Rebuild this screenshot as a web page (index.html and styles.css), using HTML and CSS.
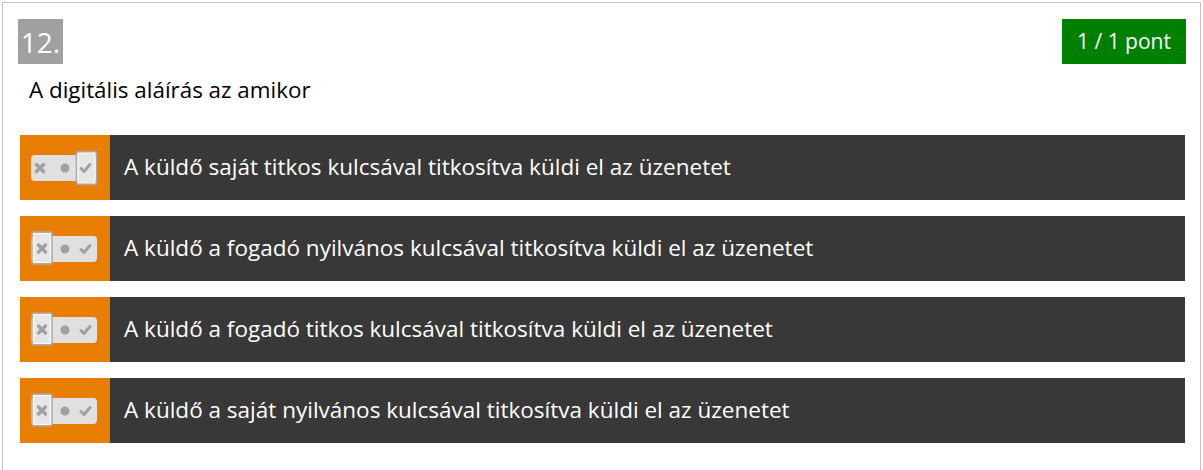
FILE: index.html
```html
<!DOCTYPE html>
<html lang="hu">
<head>
<meta charset="utf-8">
<link rel="stylesheet" href="styles.css">
</head>
<body>
<div class="question">
  <div class="qhead">
    <div class="qnum">12.</div>
    <div class="score">1 / 1 pont</div>
  </div>
  <div class="qtext">A digitális aláírás az amikor</div>
  <div class="options">
    <div class="option">
      <div class="mark">
        <svg class="toggle" width="68" height="36" viewBox="0 0 68 36">
          <rect class="bar" x="1" y="5" width="66" height="26" rx="4"/>
          <rect class="sel" x="46.5" y="1.5" width="20" height="33" rx="1"/>
          <rect class="sel-in" x="48" y="3" width="17" height="30"/>
          <path class="ic" d="M6.5 14.5 L13.5 21.5 M13.5 14.5 L6.5 21.5"/>
          <circle class="dot" cx="35" cy="18" r="4.5"/>
          <path class="ic chk" d="M51 18.5 L54 21.5 L60 14.5"/>
        </svg>
      </div>
      <div class="label">A küldő saját titkos kulcsával titkosítva küldi el az üzenetet</div>
    </div>
    <div class="option">
      <div class="mark">
        <svg class="toggle" width="68" height="36" viewBox="0 0 68 36">
          <rect class="bar" x="1" y="5" width="66" height="26" rx="4"/>
          <rect class="sel" x="2" y="1" width="20" height="32" rx="1"/>
          <rect class="sel-in" x="3.5" y="2.5" width="17" height="29"/>
          <path class="ic" d="M8.5 14 L15.5 21 M15.5 14 L8.5 21"/>
          <circle class="dot" cx="35" cy="18" r="4.5"/>
          <path class="ic chk" d="M51 18.5 L54 21.5 L60 14.5"/>
        </svg>
      </div>
      <div class="label">A küldő a fogadó nyilvános kulcsával titkosítva küldi el az üzenetet</div>
    </div>
    <div class="option">
      <div class="mark">
        <svg class="toggle" width="68" height="36" viewBox="0 0 68 36">
          <rect class="bar" x="1" y="5" width="66" height="26" rx="4"/>
          <rect class="sel" x="2" y="1" width="20" height="32" rx="1"/>
          <rect class="sel-in" x="3.5" y="2.5" width="17" height="29"/>
          <path class="ic" d="M8.5 14 L15.5 21 M15.5 14 L8.5 21"/>
          <circle class="dot" cx="35" cy="18" r="4.5"/>
          <path class="ic chk" d="M51 18.5 L54 21.5 L60 14.5"/>
        </svg>
      </div>
      <div class="label">A küldő a fogadó titkos kulcsával titkosítva küldi el az üzenetet</div>
    </div>
    <div class="option">
      <div class="mark">
        <svg class="toggle" width="68" height="36" viewBox="0 0 68 36">
          <rect class="bar" x="1" y="5" width="66" height="26" rx="4"/>
          <rect class="sel" x="2" y="1" width="20" height="32" rx="1"/>
          <rect class="sel-in" x="3.5" y="2.5" width="17" height="29"/>
          <path class="ic" d="M8.5 14 L15.5 21 M15.5 14 L8.5 21"/>
          <circle class="dot" cx="35" cy="18" r="4.5"/>
          <path class="ic chk" d="M51 18.5 L54 21.5 L60 14.5"/>
        </svg>
      </div>
      <div class="label">A küldő a saját nyilvános kulcsával titkosítva küldi el az üzenetet</div>
    </div>
  </div>
</div>
</body>
</html>
```
FILE: styles.css
```css
html, body {
  margin: 0;
  padding: 0;
  background: #ffffff;
}
body {
  font-family: "Open Sans", "Liberation Sans", sans-serif;
  color: #000;
  overflow: hidden;
}
.question {
  box-sizing: border-box;
  margin: 2px 2px 0 2px;
  border: 1px solid #c2c2c2;
  border-bottom: none;
  padding: 16px 14px 0 15px;
  height: 468px;
}
.qhead {
  display: flex;
  justify-content: space-between;
  align-items: flex-start;
  height: 45px;
}
.qnum {
  width: 45px;
  height: 45px;
  background: #a0a0a0;
  color: #fff;
  font-size: 28px;
  line-height: 47px;
  text-align: center;
}
.score {
  width: 124px;
  height: 45px;
  background: #008000;
  color: #fff;
  font-size: 21px;
  line-height: 45px;
  text-align: center;
}
.qtext {
  margin: 11px 0 30px 11px;
  font-size: 22.4px;
  line-height: 30px;
}
.options {
  display: flex;
  flex-direction: column;
  gap: 16px;
  margin: 0 1px 0 2px;
}
.option {
  display: flex;
  height: 65px;
  background: #383838;
}
.mark {
  width: 90px;
  flex: none;
  background: #e87e04;
  display: flex;
  align-items: center;
  justify-content: center;
}
.toggle {
  display: block;
  margin-left: -2px;
}
.bar {
  fill: #e0e0e0;
}
.sel {
  fill: none;
  stroke: #a8a8a8;
  stroke-width: 1.5;
}
.sel-in {
  fill: #e6e6e6;
  stroke: #f8f8f8;
  stroke-width: 1.2;
}
.ic {
  fill: none;
  stroke: #a0a0a0;
  stroke-width: 3.4;
  stroke-linecap: round;
}
.chk {
  stroke-width: 3;
  stroke-linejoin: round;
}
.dot {
  fill: #a0a0a0;
}
.label {
  color: #fff;
  font-size: 22.5px;
  line-height: 63px;
  padding-left: 14px;
}
```
